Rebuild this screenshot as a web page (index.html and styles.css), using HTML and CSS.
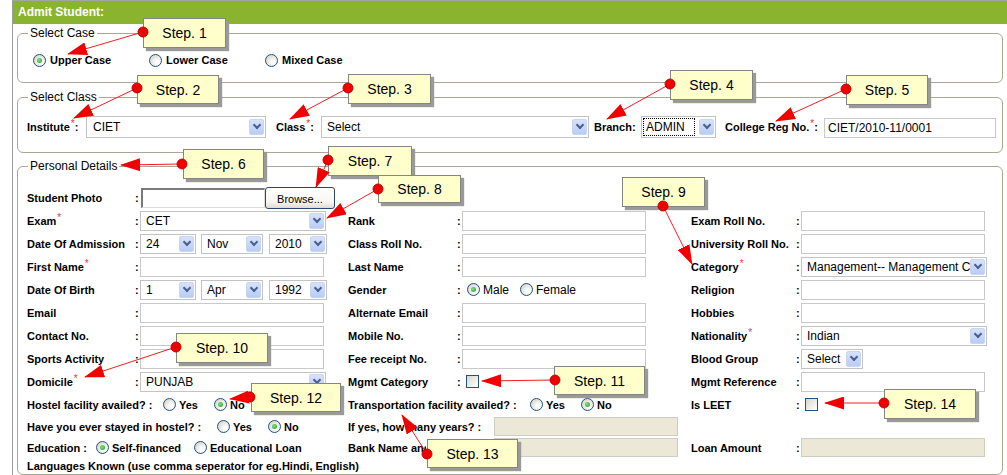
FILE: index.html
```html
<!DOCTYPE html>
<html>
<head>
<meta charset="utf-8">
<title>Admit Student</title>
<link rel="stylesheet" href="styles.css">
</head>
<body>
<div class="page">
  <div class="head">Admit Student:</div>

  <fieldset class="fs fs-case">
    <legend>Select Case</legend>
    <div class="case-row">
      <label class="ro w116 b"><span class="radio on"></span>Upper Case</label>
      <label class="ro w116 b"><span class="radio"></span>Lower Case</label>
      <label class="ro w116 b"><span class="radio"></span>Mixed Case</label>
    </div>
  </fieldset>

  <fieldset class="fs fs-class">
    <legend>Select Class</legend>
    <div class="class-row">
      <span class="cl-lab w-inst">Institute<sup class="req">*</sup>:</span>
      <span class="sel big w180"><span class="val">CIET</span><span class="dd"></span></span>
      <span class="cl-lab w-class">Class<sup class="req">*</sup>:</span>
      <span class="sel big w268"><span class="val">Select</span><span class="dd"></span></span>
      <span class="cl-lab w-branch">Branch:</span>
      <span class="sel big w75 focus"><span class="val">ADMIN</span><span class="dd"></span></span>
      <span class="cl-lab w-reg">College Reg No.<sup class="req">*</sup>:</span>
      <span class="inp reg">CIET/2010-11/0001</span>
    </div>
  </fieldset>

  <fieldset class="fs fs-pd">
    <legend>Personal Details</legend>

    <div class="row">
      <div class="cell c1"><span class="lab">Student Photo</span><span class="colon">:</span><span class="file"></span><span class="browse">Browse...</span></div>
      <div class="cell c2"></div>
      <div class="cell c3"></div>
    </div>

    <div class="row">
      <div class="cell c1"><span class="lab">Exam<sup class="req">*</sup></span><span class="colon">:</span><span class="sel w186"><span class="val">CET</span><span class="dd"></span></span></div>
      <div class="cell c2"><span class="lab">Rank</span><span class="colon">:</span><span class="inp"></span></div>
      <div class="cell c3"><span class="lab">Exam Roll No.</span><span class="colon">:</span><span class="inp"></span></div>
    </div>

    <div class="row">
      <div class="cell c1"><span class="lab">Date Of Admission</span><span class="colon">:</span>
        <span class="sel w56"><span class="val">24</span><span class="dd"></span></span>
        <span class="sel w62 g5"><span class="val">Nov</span><span class="dd"></span></span>
        <span class="sel w58 g6"><span class="val">2010</span><span class="dd"></span></span>
      </div>
      <div class="cell c2"><span class="lab">Class Roll No.</span><span class="colon">:</span><span class="inp"></span></div>
      <div class="cell c3"><span class="lab">University Roll No.</span><span class="colon">:</span><span class="inp"></span></div>
    </div>

    <div class="row">
      <div class="cell c1"><span class="lab">First Name<sup class="req">*</sup></span><span class="colon">:</span><span class="inp"></span></div>
      <div class="cell c2"><span class="lab">Last Name</span><span class="colon">:</span><span class="inp"></span></div>
      <div class="cell c3"><span class="lab">Category<sup class="req">*</sup></span><span class="colon">:</span><span class="sel w186"><span class="val">Management-- Management Category</span><span class="dd"></span></span></div>
    </div>

    <div class="row">
      <div class="cell c1"><span class="lab">Date Of Birth</span><span class="colon">:</span>
        <span class="sel w56"><span class="val">1</span><span class="dd"></span></span>
        <span class="sel w62 g5"><span class="val">Apr</span><span class="dd"></span></span>
        <span class="sel w58 g6"><span class="val">1992</span><span class="dd"></span></span>
      </div>
      <div class="cell c2"><span class="lab">Gender</span><span class="colon">:</span>
        <label class="ro w53 n first5"><span class="radio on"></span>Male</label>
        <label class="ro n"><span class="radio"></span>Female</label>
      </div>
      <div class="cell c3"><span class="lab">Religion</span><span class="colon">:</span><span class="inp"></span></div>
    </div>

    <div class="row">
      <div class="cell c1"><span class="lab">Email</span><span class="colon">:</span><span class="inp"></span></div>
      <div class="cell c2"><span class="lab">Alternate Email</span><span class="colon">:</span><span class="inp"></span></div>
      <div class="cell c3"><span class="lab">Hobbies</span><span class="colon">:</span><span class="inp"></span></div>
    </div>

    <div class="row">
      <div class="cell c1"><span class="lab">Contact No.</span><span class="colon">:</span><span class="inp"></span></div>
      <div class="cell c2"><span class="lab">Mobile No.</span><span class="colon">:</span><span class="inp"></span></div>
      <div class="cell c3"><span class="lab">Nationality<sup class="req">*</sup></span><span class="colon">:</span><span class="sel w186"><span class="val">Indian</span><span class="dd"></span></span></div>
    </div>

    <div class="row">
      <div class="cell c1"><span class="lab">Sports Activity</span><span class="colon">:</span><span class="inp"></span></div>
      <div class="cell c2"><span class="lab">Fee receipt No.</span><span class="colon">:</span><span class="inp"></span></div>
      <div class="cell c3"><span class="lab">Blood Group</span><span class="colon">:</span><span class="sel w62"><span class="val">Select</span><span class="dd"></span></span></div>
    </div>

    <div class="row">
      <div class="cell c1"><span class="lab">Domicile<sup class="req">*</sup></span><span class="colon">:</span><span class="sel w186"><span class="val">PUNJAB</span><span class="dd"></span></span></div>
      <div class="cell c2"><span class="lab">Mgmt Category</span><span class="colon">:</span><span class="chk"></span></div>
      <div class="cell c3"><span class="lab">Mgmt Reference</span><span class="colon">:</span><span class="inp"></span></div>
    </div>

    <div class="row">
      <div class="cell c1"><span class="lab2 w136">Hostel facility availed? :</span>
        <label class="ro w51 b"><span class="radio"></span>Yes</label>
        <label class="ro b"><span class="radio on"></span>No</label>
      </div>
      <div class="cell c2"><span class="lab2 w182">Transportation facility availed? :</span>
        <label class="ro w51 b"><span class="radio"></span>Yes</label>
        <label class="ro b"><span class="radio on"></span>No</label>
      </div>
      <div class="cell c3"><span class="lab">Is LEET</span><span class="colon">:</span><span class="chk"></span></div>
    </div>

    <div class="row short">
      <div class="cell c1"><span class="lab2 w190">Have you ever stayed in hostel? :</span>
        <label class="ro w51 b"><span class="radio"></span>Yes</label>
        <label class="ro b"><span class="radio on"></span>No</label>
      </div>
      <div class="cell c2"><span class="lab2 w146">If yes, how many years? :</span><span class="inp dis"></span></div>
      <div class="cell c3"></div>
    </div>

    <div class="row short">
      <div class="cell c1"><span class="lab2 w69">Education :</span>
        <label class="ro w98 b"><span class="radio on"></span>Self-financed</label>
        <label class="ro b"><span class="radio"></span>Educational Loan</label>
      </div>
      <div class="cell c2"><span class="lab2 w146"><span class="clip">Bank Name and Branch :</span></span><span class="inp dis"></span></div>
      <div class="cell c3"><span class="lab">Loan Amount</span><span class="colon">:</span><span class="inp dis"></span></div>
    </div>

    <div class="row last">
      <span class="lab2">Languages Known (use comma seperator for eg.Hindi, English)</span>
    </div>
  </fieldset>
</div>

<div class="callout s1">Step. 1</div>
<div class="callout s2">Step. 2</div>
<div class="callout s3">Step. 3</div>
<div class="callout s4">Step. 4</div>
<div class="callout s5">Step. 5</div>
<div class="callout s6">Step. 6</div>
<div class="callout s7">Step. 7</div>
<div class="callout s8">Step. 8</div>
<div class="callout s9">Step. 9</div>
<div class="callout s10">Step. 10</div>
<div class="callout s11">Step. 11</div>
<div class="callout s12">Step. 12</div>
<div class="callout s13">Step. 13</div>
<div class="callout s14">Step. 14</div>

<svg class="arrows" width="1007" height="475" viewBox="0 0 1007 475">
  <defs>
    <marker id="tip" markerUnits="userSpaceOnUse" markerWidth="20" markerHeight="13" refX="19" refY="6.5" orient="auto">
      <path d="M0 0 L20 6.5 L0 13 Z" fill="#f00000"/>
    </marker>
    <marker id="dot" markerUnits="userSpaceOnUse" markerWidth="12" markerHeight="12" refX="6" refY="6" orient="auto">
      <circle cx="6" cy="6" r="5" fill="#f00000" stroke="#b00000" stroke-width="0.8"/>
    </marker>
  </defs>
  <g stroke="#f02020" stroke-width="1" marker-start="url(#dot)" marker-end="url(#tip)">
    <line x1="143" y1="32" x2="68" y2="54"/>
    <line x1="137" y1="88" x2="74" y2="118"/>
    <line x1="348" y1="88" x2="290" y2="119"/>
    <line x1="670" y1="84" x2="607" y2="119"/>
    <line x1="846" y1="89" x2="776" y2="121"/>
    <line x1="182" y1="164" x2="121" y2="165"/>
    <line x1="328" y1="160" x2="316" y2="187"/>
    <line x1="378" y1="189" x2="327" y2="218"/>
    <line x1="663" y1="206" x2="692" y2="264"/>
    <line x1="176" y1="347" x2="85" y2="377"/>
    <line x1="555" y1="380" x2="482" y2="381"/>
    <line x1="250" y1="397" x2="230" y2="399"/>
    <line x1="427" y1="454" x2="402" y2="415"/>
    <line x1="884" y1="403" x2="825" y2="403"/>
  </g>
</svg>
</body>
</html>
```

FILE: styles.css
```css
html, body {
  margin: 0;
  padding: 0;
}
body {
  position: relative;
  width: 1007px;
  height: 475px;
  overflow: hidden;
  background: #fff;
  font-family: "Liberation Sans", Arial, sans-serif;
  color: #000;
}
.page {
  margin-left: 12px;
  border-left: 1px solid #9c9c9c;
  border-top: 1px solid #a4a4a4;
  height: 474px;
  overflow: hidden;
}
.head {
  height: 23px;
  line-height: 22px;
  background: #8ab42f;
  color: #fff;
  font-weight: bold;
  font-size: 12px;
  padding-left: 5px;
}

/* fieldsets */
.fs {
  margin: 0 4px 0 4px;
  padding: 0 0 0 9px;
  border: 1px solid #aaa696;
  border-radius: 6px;
  min-width: 0;
}
.fs legend {
  font-size: 12px;
  line-height: 14px;
  padding: 0 2px;
  margin-left: 1px;
}
.fs-case {
  margin-top: 2px;
  padding-top: 10px;
  padding-bottom: 12px;
}
.fs-class {
  margin-top: 7px;
  padding-top: 12px;
  padding-bottom: 14px;
}
.fs-pd {
  margin-top: 6px;
  padding-top: 13px;
  padding-bottom: 0;
}

/* radio / options */
.case-row {
  display: flex;
  align-items: center;
  height: 20px;
  padding-left: 6px;
}
.ro {
  display: inline-flex;
  align-items: center;
  white-space: nowrap;
  font-size: 11px;
  flex: none;
}
.ro.b { font-weight: bold; }
.ro.n { font-size: 12px; font-weight: normal; }
.w116 { width: 116px; }
.w51 { width: 51px; }
.w53 { width: 53px; }
.w98 { width: 98px; }
.first5 { margin-left: 5px; }
.radio {
  display: inline-block;
  position: relative;
  flex: none;
  width: 13px;
  height: 13px;
  box-sizing: border-box;
  border: 1px solid #1f5384;
  border-radius: 50%;
  background: radial-gradient(circle at 65% 65%, #ffffff 15%, #e6e4dc 55%, #cfccc0 95%);
  margin-right: 3px;
}
.w116 .radio { margin-right: 4px; }
.radio.on::after {
  content: "";
  position: absolute;
  left: 3px;
  top: 3px;
  width: 5px;
  height: 5px;
  border-radius: 50%;
  background: radial-gradient(circle at 40% 40%, #7ee37e, #1e9e1e);
}
.chk {
  display: inline-block;
  flex: none;
  width: 13px;
  height: 13px;
  box-sizing: border-box;
  border: 1px solid #1f5384;
  background: linear-gradient(135deg, #d8d6cc, #f4f4f0 70%, #ffffff);
  margin-left: 4px;
}

/* class row */
.class-row {
  display: flex;
  align-items: center;
  height: 22px;
}
.cl-lab {
  font-weight: bold;
  font-size: 11px;
  white-space: nowrap;
  flex: none;
}
.w-inst { width: 59px; }
.w-class { width: 45px; margin-left: 10px; }
.w-branch { width: 47px; margin-left: 5px; }
.w-reg { width: 99px; margin-left: 9px; }
.req {
  color: #e03a3a;
  font-weight: normal;
  font-size: 10px;
  line-height: 0;
  vertical-align: 4px;
  margin-left: 1px;
}

/* selects and inputs */
.sel {
  display: inline-flex;
  align-items: center;
  flex: none;
  height: 20px;
  box-sizing: border-box;
  border: 1px solid #c3c3c3;
  background: #fff;
  font-size: 12px;
  padding-left: 5px;
  overflow: hidden;
}
.sel .val {
  flex: 1;
  white-space: nowrap;
  overflow: hidden;
}
.sel .dd {
  flex: none;
  width: 15px;
  align-self: stretch;
  margin: 1px 1px 1px 0;
  border-radius: 2px;
  background: linear-gradient(#d7e2fb, #b8ccf6);
  border: 1px solid #c8d6f4;
  box-sizing: border-box;
  display: flex;
  align-items: center;
  justify-content: center;
}
.sel .dd::after {
  content: "";
  width: 4px;
  height: 4px;
  border-right: 2px solid #4b5f8c;
  border-bottom: 2px solid #4b5f8c;
  transform: translateY(-2px) rotate(45deg);
}
.sel.big { height: 22px; }
.sel.big .dd { margin: 2px 1px 2px 0; }
.big.w180 { padding-left: 6px; }
.w180 { width: 180px; }
.w268 { width: 268px; }
.w75 { width: 75px; }
.w186 { width: 186px; }
.w56 { width: 56px; }
.w62 { width: 62px; }
.w58 { width: 58px; }
.g5 { margin-left: 5px; }
.g6 { margin-left: 6px; }
.sel.focus { padding-left: 1px; }
.sel.focus .val {
  border: 1px dotted #000;
  height: 16px;
  line-height: 16px;
  padding-left: 2px;
  margin-right: 4px;
}
.inp {
  display: inline-block;
  flex: none;
  width: 184px;
  height: 20px;
  box-sizing: border-box;
  border: 1px solid #c9c9c9;
  background: #fff;
  font-size: 12px;
  line-height: 18px;
  padding-left: 3px;
}
.inp.reg {
  width: 172px;
  margin-top: 1px;
}
.inp.dis {
  height: 19px;
  background: #ebe8d8;
  border-color: #cfccc0;
}
.file {
  display: inline-block;
  flex: none;
  width: 124px;
  height: 20px;
  box-sizing: border-box;
  margin-left: 1px;
  border-top: 2px solid #7a7a7a;
  border-left: 2px solid #7a7a7a;
  border-right: 1px solid #dcdcdc;
  border-bottom: 1px solid #dcdcdc;
  background: #fff;
}
.browse {
  display: inline-flex;
  align-items: center;
  justify-content: center;
  flex: none;
  width: 70px;
  height: 22px;
  box-sizing: border-box;
  border: 1px solid #27476f;
  border-radius: 3px;
  background: linear-gradient(#ffffff, #f6f5f0 70%, #dedbd0);
  font-size: 11px;
  padding-top: 2px;
}

/* personal detail grid */
.row {
  display: flex;
  align-items: center;
  height: 23px;
}
.row.short { height: 21px; }
.row.last { height: 16px; }
.cell {
  display: flex;
  align-items: center;
  flex: none;
}
.c1 { width: 321px; }
.c2 { width: 343px; }
.c3 { flex: 1; }
.lab, .lab2 {
  font-weight: bold;
  font-size: 11px;
  white-space: nowrap;
  flex: none;
}
.c1 .lab { width: 108px; }
.c2 .lab { width: 109px; }
.c3 .lab { width: 105px; }
.w136 { width: 136px; }
.w182 { width: 182px; }
.w190 { width: 190px; }
.w146 { width: 146px; }
.w69 { width: 69px; }
.clip {
  display: block;
  width: 78px;
  overflow: hidden;
}
.colon {
  width: 5px;
  font-weight: bold;
  font-size: 11px;
  flex: none;
}

/* callouts */
.callout {
  position: absolute;
  z-index: 2;
  box-sizing: border-box;
  display: flex;
  align-items: center;
  justify-content: center;
  background: #ffffcc;
  border: 1px solid #858585;
  box-shadow: 3px 3px 1px #9a9a9a;
  font-size: 14px;
  font-family: "Liberation Sans", Arial, sans-serif;
}
.s1 { left: 143px; top: 18px; width: 83px; height: 30px; }
.s2 { left: 137px; top: 75px; width: 82px; height: 29px; }
.s3 { left: 348px; top: 74px; width: 83px; height: 30px; }
.s4 { left: 670px; top: 70px; width: 83px; height: 30px; }
.s5 { left: 846px; top: 75px; width: 82px; height: 30px; }
.s6 { left: 183px; top: 149px; width: 81px; height: 30px; }
.s7 { left: 328px; top: 146px; width: 84px; height: 30px; }
.s8 { left: 378px; top: 175px; width: 83px; height: 28px; }
.s9 { left: 622px; top: 177px; width: 83px; height: 30px; }
.s10 { left: 176px; top: 333px; width: 92px; height: 30px; }
.s11 { left: 554px; top: 366px; width: 91px; height: 29px; }
.s12 { left: 251px; top: 383px; width: 90px; height: 29px; }
.s13 { left: 427px; top: 439px; width: 91px; height: 29px; }
.s14 { left: 884px; top: 389px; width: 92px; height: 30px; }

.arrows {
  position: absolute;
  left: 0;
  top: 0;
  z-index: 3;
  pointer-events: none;
}
```
